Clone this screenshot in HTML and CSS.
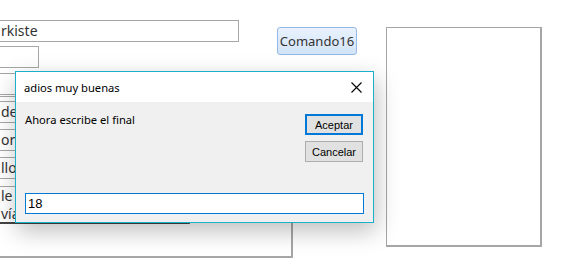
FILE: index.html
```html
<!DOCTYPE html>
<html lang="es">
<head>
    <meta charset="UTF-8">
    <meta name="viewport" content="width=device-width, initial-scale=1.0">
    <title>Formulario</title>
    <link rel="stylesheet" href="styles.css">
</head>
<body>
    <!-- Formulario de fondo -->
    <div class="form">
        <div class="col-left">
            <div class="field field-name">rkiste</div>
            <div class="field field-short"></div>
            <div class="field field-row"></div>
            <div class="field field-row">de</div>
            <div class="field field-row">ore</div>
            <div class="field field-row">llo,</div>
            <div class="field field-memo">le l<br>vía</div>
            <div class="subform"></div>
        </div>

        <div class="col-mid">
            <button class="cmd">Comando16</button>
        </div>

        <div class="col-right">
            <div class="panel"></div>
        </div>
    </div>

    <!-- Cuadro de diálogo InputBox -->
    <div class="dialog">
        <div class="dialog-title">
            <span>adios muy buenas</span>
            <svg class="close" width="11" height="11" viewBox="0 0 11 11">
                <path d="M0.5 0.5 L10.5 10.5 M10.5 0.5 L0.5 10.5" stroke="#000" stroke-width="1.1" fill="none"/>
            </svg>
        </div>
        <div class="dialog-body">
            <div class="dialog-top">
                <p class="prompt">Ahora escribe el final</p>
                <div class="dialog-buttons">
                    <button class="btn btn-default">Aceptar</button>
                    <button class="btn">Cancelar</button>
                </div>
            </div>
            <input type="text" class="answer" value="18">
        </div>
    </div>
</body>
</html>
```

FILE: styles.css
```css
/* Page de base */
body {
    margin: 0;
    width: 569px;
    height: 277px;
    overflow: hidden;
    position: relative;
    background: #ffffff;
    font-family: "Noto Sans", "Open Sans", sans-serif;
    color: #333;
}

.form {
    display: flex;
}

/* Colonne de gauche : champs du formulaire */
.col-left {
    display: flex;
    flex-direction: column;
    margin-left: -60px;
    padding-top: 20px;
    width: 299px;
    flex: none;
}

.field {
    box-sizing: border-box;
    border: 1px solid #a6a6a6;
    height: 22px;
    font-size: 14px;
    line-height: 20px;
    padding-left: 60px;
    background: #fff;
    white-space: nowrap;
}

.field-name {
    width: 299px;
}

.field-short {
    width: 99px;
    margin-top: 4px;
}

.field-row {
    width: 200px;
    margin-top: 5px;
}

.field-row + .field-row {
    margin-top: 6px;
}

.field-memo {
    width: 250px;
    height: 38px;
    margin-top: 7px;
    line-height: 18px;
    border-bottom: 2px solid #444;
}

.subform {
    box-sizing: border-box;
    margin-top: -128px;
    height: 162px;
    width: 353px;
    border: 2px solid #a6a6a6;
    border-top-width: 1px;
    position: relative;
    z-index: -1;
}

/* Bouton Comando16 */
.col-mid {
    padding-top: 27px;
    margin-left: 38px;
    flex: none;
}

.cmd {
    box-sizing: border-box;
    width: 80px;
    height: 28px;
    padding: 0;
    border: 1px solid #94b9e6;
    border-radius: 3px;
    background: linear-gradient(#e9f2fd, #d2e3f8);
    font-family: "Noto Sans", sans-serif;
    font-size: 13px;
    color: #333;
}

/* Zone de droite */
.col-right {
    padding-top: 27px;
    padding-left: 29px;
}

.panel {
    box-sizing: border-box;
    width: 156px;
    height: 220px;
    border: 2px solid #a6a6a6;
    border-width: 1px 2px 2px 1px;
}

/* Boîte de dialogue */
.dialog {
    position: absolute;
    left: 15px;
    top: 71px;
    width: 359px;
    height: 152px;
    box-sizing: border-box;
    border: 1px solid #1ab0c9;
    background: #f0f0f0;
    box-shadow: 2px 8px 22px rgba(0, 0, 0, 0.26);
    display: flex;
    flex-direction: column;
    color: #000;
}

.dialog-title {
    height: 30px;
    background: #fff;
    display: flex;
    align-items: center;
    justify-content: space-between;
    padding: 0 11px 0 8px;
    font-size: 11.2px;
}

.dialog-body {
    flex: 1;
    padding: 10px 10px 0 9px;
    display: flex;
    flex-direction: column;
}

.dialog-top {
    display: flex;
    justify-content: space-between;
    height: 81px;
}

.prompt {
    margin: 0;
    font-size: 11.2px;
}

.dialog-buttons {
    display: flex;
    flex-direction: column;
    gap: 6px;
    padding-top: 2px;
}

.btn {
    box-sizing: border-box;
    width: 58px;
    height: 21px;
    padding: 0;
    border: 1px solid #adadad;
    background: #e1e1e1;
    font-family: "Liberation Sans", Arial, sans-serif;
    font-size: 11px;
    color: #000;
}

.btn-default {
    border: 2px solid #0078d7;
}

.answer {
    box-sizing: border-box;
    width: 339px;
    height: 21px;
    border: 1px solid #0078d7;
    padding: 0 2px;
    font-family: "Liberation Sans", Arial, sans-serif;
    font-size: 13px;
    outline: none;
}
```
